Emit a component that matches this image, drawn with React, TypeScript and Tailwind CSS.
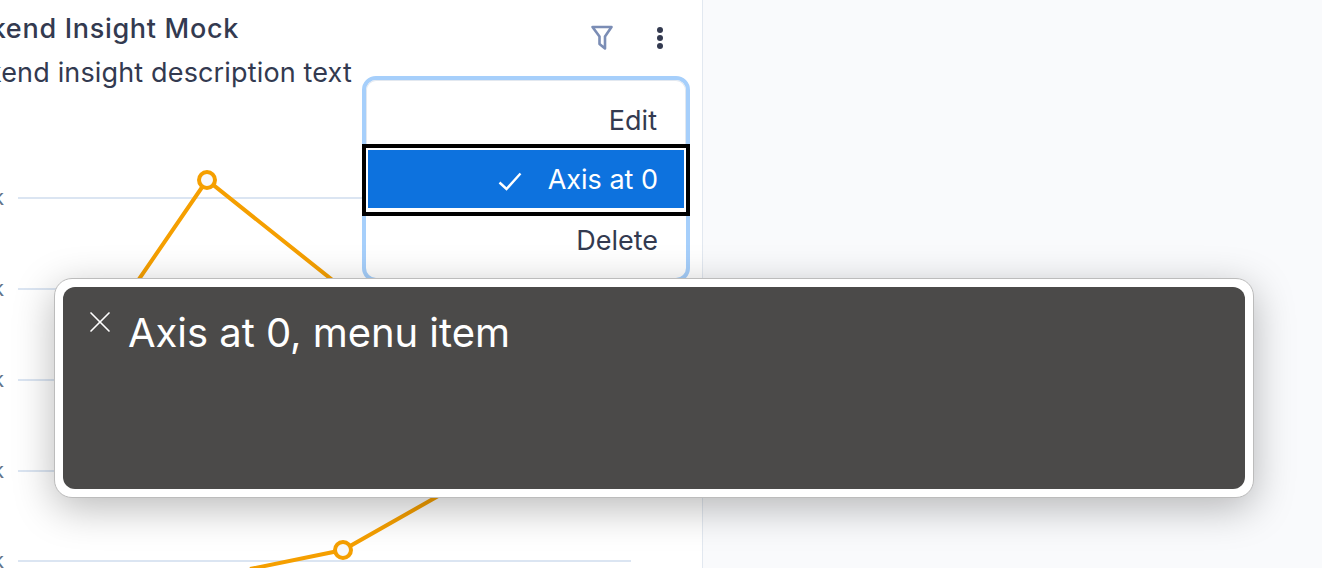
import { X } from "lucide-react";

const gridLines = [68, 159, 250, 341, 431];
const labels = ["40k", "30k", "20k", "10k", "0k"];

function Chart() {
  return (
    <svg width="702" height="438" viewBox="0 0 702 438" className="block overflow-visible">
      {gridLines.map((y, i) => (
        <g key={y}>
          <line x1="18" x2="631" y1={y} y2={y} stroke="#dbe5f2" strokeWidth="2" />
          <text x="4" y={y + 7} textAnchor="end" fontSize="21" fill="#64748b">
            {labels[i]}
          </text>
        </g>
      ))}
      <polyline
        points="100,206 207,50 400,204 500,331 343,420 250,439"
        fill="none"
        stroke="#f59f00"
        strokeWidth="4"
      />
      <circle cx="207" cy="50" r="8" fill="#f8f9fb" stroke="#f59f00" strokeWidth="4" />
      <circle cx="343" cy="420" r="8" fill="#f8f9fb" stroke="#f59f00" strokeWidth="4" />
    </svg>
  );
}

function FunnelIcon() {
  return (
    <svg width="24" height="26" viewBox="0 0 24 26" fill="none" className="text-[#7b8db5]">
      <path
        d="M2.5 2H21.5L15 11.5V23.5L9.5 19V11.5Z"
        stroke="currentColor"
        strokeWidth="2.6"
        strokeLinejoin="round"
      />
    </svg>
  );
}

function ActionMenu() {
  return (
    <div className="absolute left-[362px] top-[76px] w-[328px] h-[206px] rounded-[14px] border-[4px] border-[#a6cffb] bg-white text-[27px] text-[#333a50]">
      <div className="h-[64px] pt-[18px] pr-[28px] flex items-center justify-end rounded-t-[10px] border-t border-x border-[#e2e8f0]">
        Edit
      </div>
      <div className="-mx-[4px] h-[72px] border-[4px] border-black bg-white pt-[2px] pb-[4px] px-[2px]">
        <div className="h-full pt-[3px] bg-[#0d72de] text-white flex items-center justify-end gap-[26px] pr-[26px]">
          <svg width="24" height="19" viewBox="0 0 24 19" fill="none" className="mt-[1px]">
            <path d="M1.5 10.5L8.5 17L22.5 1.5" stroke="currentColor" strokeWidth="2.4" />
          </svg>
          <span>Axis at 0</span>
        </div>
      </div>
      <div className="h-[60px] pb-[10px] pr-[28px] flex items-center justify-end">Delete</div>
    </div>
  );
}

function CaptionPanel() {
  return (
    <div className="absolute left-[54px] top-[278px] w-[1200px] h-[220px] rounded-[18px] border border-[#bcbcbc] bg-white p-[8px] shadow-[0_10px_40px_rgba(0,0,0,0.28)]">
      <div className="h-full rounded-[12px] bg-[#4b4a49] text-white flex items-start pl-[19px] pt-[17px] gap-[10px]">
        <X size={36} strokeWidth={1.1} className="shrink-0" />
        <span className="text-[40px] leading-[50px] mt-[4px] tracking-[-0.05px]">Axis at 0, menu item</span>
      </div>
    </div>
  );
}

export default function App() {
  return (
    <div className="relative w-[1322px] h-[568px] overflow-hidden flex bg-[#f9fafc] font-['Inter',sans-serif]">
      <div className="w-[703px] h-full bg-white border-r border-[#e2e8f0] flex flex-col">
        <div className="flex items-start justify-between pr-[39px] pt-[10px]">
          <div className="w-[352px] overflow-hidden flex flex-col items-end text-[#333a50]">
            <h2 className="w-full whitespace-nowrap text-[27px] leading-[38px] font-medium tracking-[0.7px] flex justify-end">
              <span className="pr-[113px]">Backend Insight Mock</span>
            </h2>
            <p className="whitespace-nowrap text-[27px] leading-[38px] mt-[6px] tracking-[0.15px]">
              Backend insight description text
            </p>
          </div>
          <div className="flex items-center gap-[43px] pt-[15px]">
            <FunnelIcon />
            <div className="flex flex-col gap-[2px]">
              <span className="size-[6px] rounded-full bg-[#333a50]" />
              <span className="size-[6px] rounded-full bg-[#333a50]" />
              <span className="size-[6px] rounded-full bg-[#333a50]" />
            </div>
          </div>
        </div>
        <div className="mt-[38px]">
          <Chart />
        </div>
      </div>
      <div className="flex-1" />
      <ActionMenu />
      <CaptionPanel />
    </div>
  );
}
